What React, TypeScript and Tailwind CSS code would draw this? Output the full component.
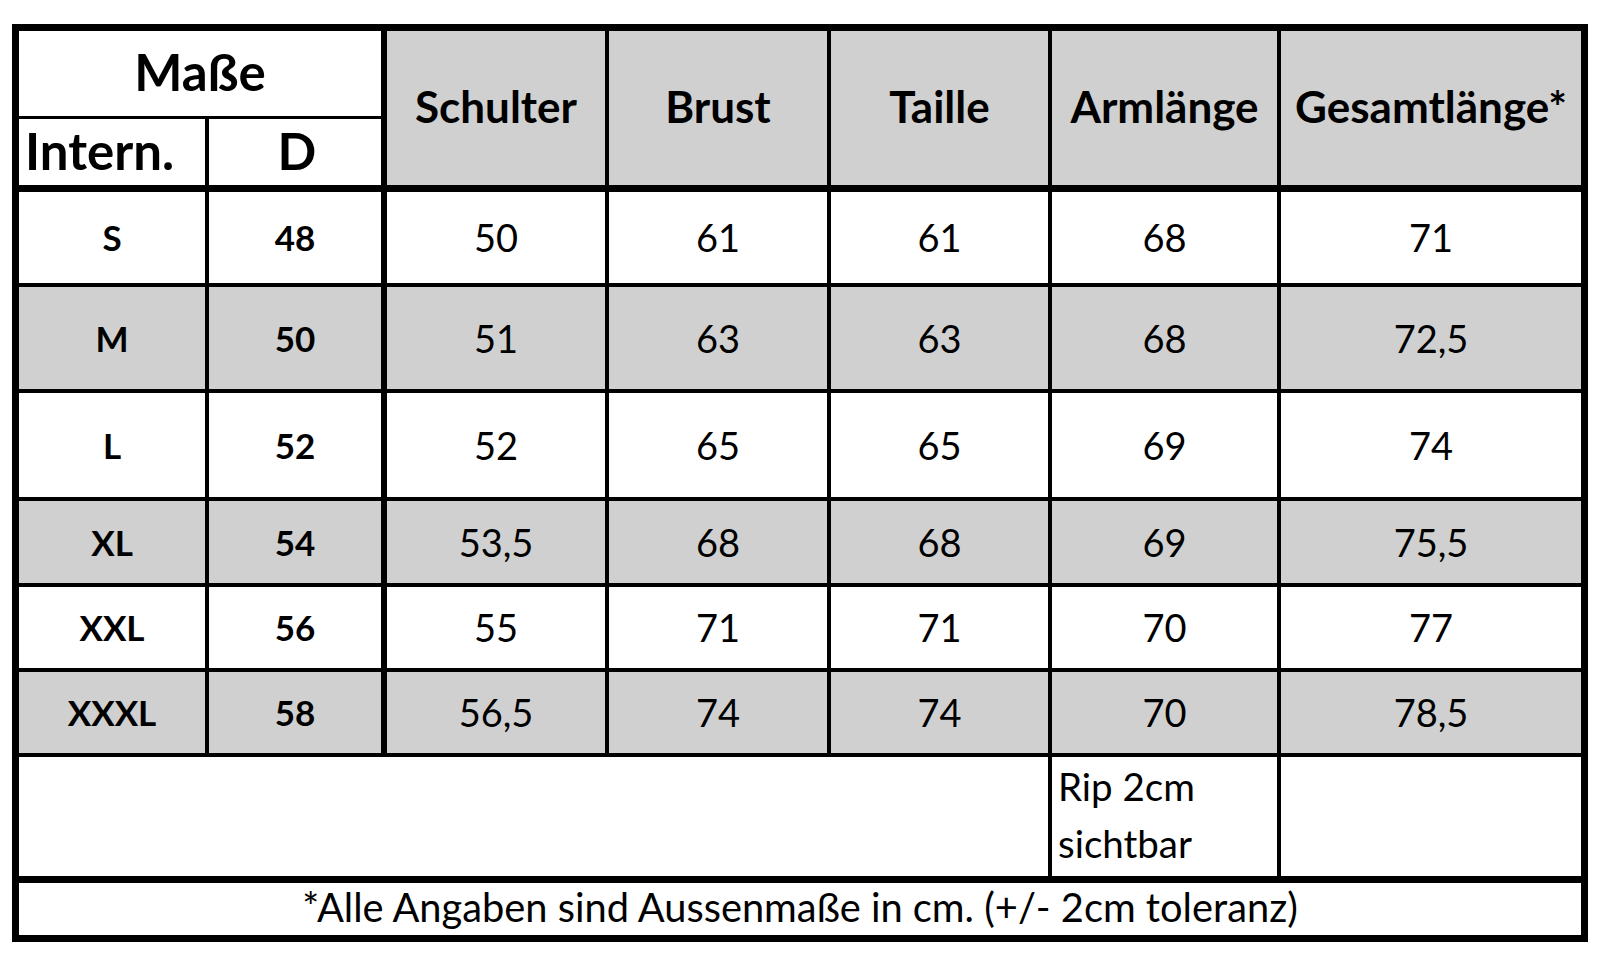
import React from 'react';

type Row = { intern: string; d: string; values: string[]; grey: boolean };

const rows: Row[] = [
    { intern: 'S', d: '48', values: ['50', '61', '61', '68', '71'], grey: false },
    { intern: 'M', d: '50', values: ['51', '63', '63', '68', '72,5'], grey: true },
    { intern: 'L', d: '52', values: ['52', '65', '65', '69', '74'], grey: false },
    { intern: 'XL', d: '54', values: ['53,5', '68', '68', '69', '75,5'], grey: true },
    { intern: 'XXL', d: '56', values: ['55', '71', '71', '70', '77'], grey: false },
    { intern: 'XXXL', d: '58', values: ['56,5', '74', '74', '70', '78,5'], grey: true },
];

const headers = ['Schulter', 'Brust', 'Taille', 'Armlänge', 'Gesamtlänge*'];

export default function App() {
    return (
        <div className="min-h-screen bg-white pt-[24px] pl-[12px] font-['Lato',sans-serif] text-black">
            <div className="w-[1576px] h-[918px] border-[7px] border-black">
                <div className="grid grid-cols-[190px_178px_222px_222px_221px_229px_300px] grid-rows-[88px_73px_95px_106px_108px_86px_85px_85px_126px_52px]">
                    {/* Header */}
                    <div className="col-span-2 flex items-center justify-center pb-[4px] border-r-[6px] border-b-[3px] border-black text-[51px] font-bold leading-none">
                        Maße
                    </div>
                    {headers.map((h, i) => (
                        <div
                            key={h}
                            className={`row-span-2 flex items-center justify-center pb-[4px] bg-[#d0d0d0] border-b-[7px] border-black text-[44px] font-bold leading-none whitespace-nowrap ${i < headers.length - 1 ? 'border-r-[4px]' : ''}`}
                        >
                            {h}
                        </div>
                    ))}
                    <div className="flex items-center pl-[6px] pb-[3px] border-r-[4px] border-b-[7px] border-black text-[51px] font-bold leading-none">
                        Intern.
                    </div>
                    <div className="flex items-center justify-center pl-[4px] pb-[3px] border-r-[6px] border-b-[7px] border-black text-[51px] font-bold leading-none">
                        D
                    </div>

                    {/* Size rows */}
                    {rows.map((r) => {
                        const bg = r.grey ? 'bg-[#d0d0d0]' : 'bg-white';
                        return (
                            <React.Fragment key={r.intern}>
                                <div className={`${bg} flex items-center justify-center border-r-[4px] border-b-[4px] border-black text-[35px] font-bold`}>
                                    {r.intern}
                                </div>
                                <div className={`${bg} flex items-center justify-center border-r-[6px] border-b-[4px] border-black text-[35px] font-bold`}>
                                    {r.d}
                                </div>
                                {r.values.map((v, i) => (
                                    <div
                                        key={i}
                                        className={`${bg} flex items-center justify-center border-b-[4px] border-black text-[38px] ${i < r.values.length - 1 ? 'border-r-[4px]' : ''}`}
                                    >
                                        {v}
                                    </div>
                                ))}
                            </React.Fragment>
                        );
                    })}

                    {/* Note row */}
                    <div className="col-span-5 border-r-[4px] border-b-[7px] border-black" />
                    <div className="flex flex-col justify-center pl-[6px] pb-[4px] border-r-[4px] border-b-[7px] border-black text-[38.5px] leading-[57px]">
                        <span>Rip 2cm</span>
                        <span>sichtbar</span>
                    </div>
                    <div className="border-b-[7px] border-black" />

                    {/* Footer */}
                    <div className="col-span-7 flex items-center justify-center pb-[5px] text-[39.8px] leading-none whitespace-nowrap">
                        *Alle Angaben sind Aussenmaße in cm. (+/- 2cm toleranz)
                    </div>
                </div>
            </div>
        </div>
    );
}
